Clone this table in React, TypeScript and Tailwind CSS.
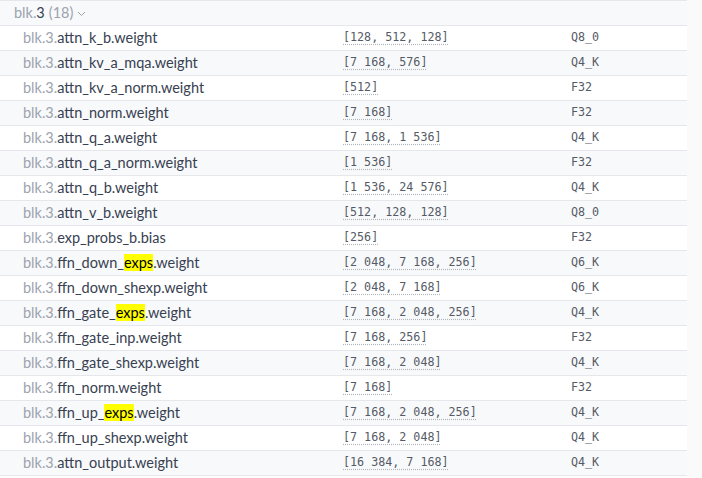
import React from 'react';

type Tensor = {
  name: string;
  shape: string;
  type: string;
};

const NB = '\u202f';

const tensors: Tensor[] = [
  { name: 'attn_k_b.weight', shape: '[128, 512, 128]', type: 'Q8_0' },
  { name: 'attn_kv_a_mqa.weight', shape: `[7${NB}168, 576]`, type: 'Q4_K' },
  { name: 'attn_kv_a_norm.weight', shape: '[512]', type: 'F32' },
  { name: 'attn_norm.weight', shape: `[7${NB}168]`, type: 'F32' },
  { name: 'attn_q_a.weight', shape: `[7${NB}168, 1${NB}536]`, type: 'Q4_K' },
  { name: 'attn_q_a_norm.weight', shape: `[1${NB}536]`, type: 'F32' },
  { name: 'attn_q_b.weight', shape: `[1${NB}536, 24${NB}576]`, type: 'Q4_K' },
  { name: 'attn_v_b.weight', shape: '[512, 128, 128]', type: 'Q8_0' },
  { name: 'exp_probs_b.bias', shape: '[256]', type: 'F32' },
  { name: 'ffn_down_exps.weight', shape: `[2${NB}048, 7${NB}168, 256]`, type: 'Q6_K' },
  { name: 'ffn_down_shexp.weight', shape: `[2${NB}048, 7${NB}168]`, type: 'Q6_K' },
  { name: 'ffn_gate_exps.weight', shape: `[7${NB}168, 2${NB}048, 256]`, type: 'Q4_K' },
  { name: 'ffn_gate_inp.weight', shape: `[7${NB}168, 256]`, type: 'F32' },
  { name: 'ffn_gate_shexp.weight', shape: `[7${NB}168, 2${NB}048]`, type: 'Q4_K' },
  { name: 'ffn_norm.weight', shape: `[7${NB}168]`, type: 'F32' },
  { name: 'ffn_up_exps.weight', shape: `[7${NB}168, 2${NB}048, 256]`, type: 'Q4_K' },
  { name: 'ffn_up_shexp.weight', shape: `[7${NB}168, 2${NB}048]`, type: 'Q4_K' },
  { name: 'attn_output.weight', shape: `[16${NB}384, 7${NB}168]`, type: 'Q4_K' },
];

const sans = "font-['Source_Sans_Pro','Lato','Noto_Sans',sans-serif]";
const mono = "font-['DejaVu_Sans_Mono',monospace] text-[11.7px] text-[#555b66]";

function TensorName({ name }: { name: string }) {
  const parts = name.split('_exps');
  return (
    <span className="text-[#374151]">
      <span className="text-[#9ca3af]">blk.3.</span>
      {parts.length > 1 ? (
        <>
          {parts[0]}_<mark className="bg-[#ffff00] text-black">exps</mark>
          {parts[1]}
        </>
      ) : (
        name
      )}
    </span>
  );
}

export default function App() {
  return (
    <div className={`flex w-[702px] h-[478px] bg-white ${sans}`}>
      <div className="w-[687px] flex flex-col">
        {/* group header */}
        <div className="h-[26px] border-y border-[#e5e7eb] bg-[#f8f9fb] flex items-center pl-[14px] text-[14.5px] leading-none">
          <span className="text-[#9ca3af]">blk.</span>
          <span className="text-[#374151]">3</span>
          <span className="text-[#9ca3af] ml-1">(18)</span>
          <svg className="ml-[4px] mt-[1px]" width="9" height="6" viewBox="0 0 9 6" fill="none">
            <path d="M1 1l3.5 3.5L8 1" stroke="#9ca3af" strokeWidth="1" />
          </svg>
        </div>
        {tensors.map((t, i) => (
          <div
            key={t.name}
            className={`h-[25px] border-b border-[#e5e7eb] grid grid-cols-[343px_228px_1fr] items-center ${
              i % 2 === 1 ? 'bg-[#f8f9fb]' : 'bg-white'
            }`}
          >
            <div className="pl-[23px] text-[14.5px] leading-none whitespace-nowrap">
              <TensorName name={t.name} />
            </div>
            <div className={mono}>
              <span className="underline decoration-dotted decoration-[#b0b5bd] underline-offset-[3px]">
                {t.shape}
              </span>
            </div>
            <div className={mono}>{t.type}</div>
          </div>
        ))}
      </div>
      <div className="flex-1 bg-[#fafafb]" />
    </div>
  );
}
